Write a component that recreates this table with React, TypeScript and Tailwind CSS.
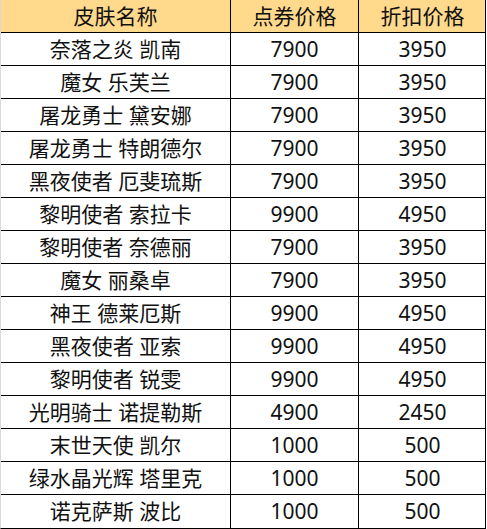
import React from "react";

const rows: [string, string, string][] = [
  ["奈落之炎 凯南", "7900", "3950"],
  ["魔女 乐芙兰", "7900", "3950"],
  ["屠龙勇士 黛安娜", "7900", "3950"],
  ["屠龙勇士 特朗德尔", "7900", "3950"],
  ["黑夜使者 厄斐琉斯", "7900", "3950"],
  ["黎明使者 索拉卡", "9900", "4950"],
  ["黎明使者 奈德丽", "7900", "3950"],
  ["魔女 丽桑卓", "7900", "3950"],
  ["神王 德莱厄斯", "9900", "4950"],
  ["黑夜使者 亚索", "9900", "4950"],
  ["黎明使者 锐雯", "9900", "4950"],
  ["光明骑士 诺提勒斯", "4900", "2450"],
  ["末世天使 凯尔", "1000", "500"],
  ["绿水晶光辉 塔里克", "1000", "500"],
  ["诺克萨斯 波比", "1000", "500"],
];

export default function App() {
  return (
    <div
      className="w-[487px] h-[529px] bg-white text-[#111] text-[21px]"
      style={{ fontFamily: '"Noto Sans", "Noto Sans CJK SC", sans-serif' }}
    >
      <div className="w-[486px] border-l border-l-[#d9d9d9] border-r border-r-black border-b border-b-black">
        <div className="grid grid-cols-[230px_128px_127px] h-[33px] bg-[#ffd98c] border-b border-black">
          <div className="flex items-center justify-center border-r border-black leading-none">皮肤名称</div>
          <div className="flex items-center justify-center border-r border-black leading-none">点券价格</div>
          <div className="flex items-center justify-center leading-none">折扣价格</div>
        </div>
        {rows.map((r, i) => (
          <div
            key={i}
            className={`grid grid-cols-[230px_128px_127px] h-[33px] ${i < rows.length - 1 ? "border-b border-black" : ""}`}
          >
            <div className="flex items-center justify-center border-r border-black leading-none">{r[0]}</div>
            <div className="flex items-center justify-center border-r border-black leading-none">{r[1]}</div>
            <div className="flex items-center justify-center leading-none">{r[2]}</div>
          </div>
        ))}
      </div>
    </div>
  );
}
